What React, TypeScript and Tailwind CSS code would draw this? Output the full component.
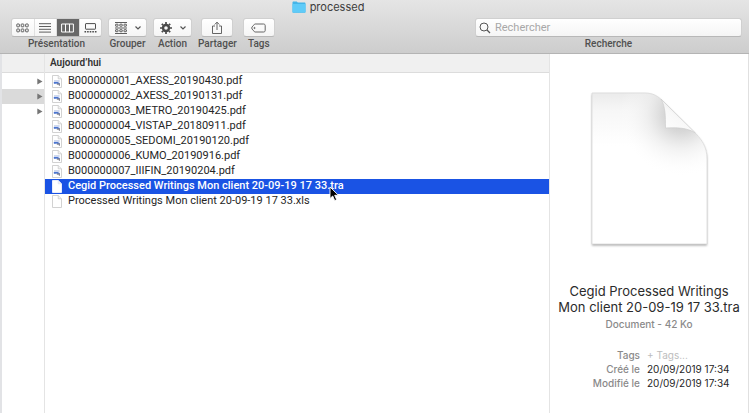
import { useState } from 'react'
import type { ReactNode } from 'react'

type FileKind = 'pdf' | 'blank'

interface FileItem {
  name: string
  kind: FileKind
}

const FILES: FileItem[] = [
  { name: 'B000000001_AXESS_20190430.pdf', kind: 'pdf' },
  { name: 'B000000002_AXESS_20190131.pdf', kind: 'pdf' },
  { name: 'B000000003_METRO_20190425.pdf', kind: 'pdf' },
  { name: 'B000000004_VISTAP_20180911.pdf', kind: 'pdf' },
  { name: 'B000000005_SEDOMI_20190120.pdf', kind: 'pdf' },
  { name: 'B000000006_KUMO_20190916.pdf', kind: 'pdf' },
  { name: 'B000000007_IIIFIN_20190204.pdf', kind: 'pdf' },
  { name: 'Cegid Processed Writings Mon client 20-09-19 17 33.tra', kind: 'blank' },
  { name: 'Processed Writings Mon client 20-09-19 17 33.xls', kind: 'blank' },
]

// Parent column: only the disclosure arrows stick out
const PARENT_ROWS = [{ active: false }, { active: true }, { active: false }]

const VIEWS = [
  { id: 'icons', label: 'Icônes', icon: <IconsViewIcon /> },
  { id: 'list', label: 'Liste', icon: <ListViewIcon /> },
  { id: 'columns', label: 'Colonnes', icon: <ColumnsViewIcon /> },
  { id: 'gallery', label: 'Galerie', icon: <GalleryViewIcon /> },
]

function IconsViewIcon() {
  return (
    <svg width="13" height="10" viewBox="0 0 13 10" fill="none" stroke="#4d4d4d">
      {[0.5, 4.9, 9.3].map(x => [1, 6].map(y => (
        <rect key={`${x}-${y}`} x={x + 0.3} y={y} width="2.6" height="2.8" rx="0.5" strokeWidth="0.9" />
      )))}
    </svg>
  )
}

function ListViewIcon() {
  return (
    <svg width="12" height="10" viewBox="0 0 12 10" stroke="#4d4d4d" strokeWidth="0.9">
      <path d="M0 .7h12M0 3.5h12M0 6.3h12M0 9.1h12" />
    </svg>
  )
}

function ColumnsViewIcon() {
  return (
    <svg width="13" height="10" viewBox="0 0 13 10" fill="none" stroke="#fff">
      <path d="M.6 1h11.8v8H.6zM4.5 1v8M8.5 1v8" />
    </svg>
  )
}

function GalleryViewIcon() {
  return (
    <svg width="13" height="10" viewBox="0 0 13 10" fill="none" stroke="#4d4d4d">
      <rect x="1.5" y=".6" width="10" height="5.6" rx=".5" />
      <path d="M.5 8.8h12" strokeWidth="1.4" strokeDasharray="1.6 1" />
    </svg>
  )
}

function GroupIcon() {
  return (
    <svg width="12" height="12" viewBox="0 0 12 12" fill="none" stroke="#4d4d4d" strokeWidth=".9">
      <path d="M0 .5h12M0 6h12M0 11.5h12" />
      {[0.6, 4.8, 9].map(x => [2.2, 7.7].map(y => (
        <rect key={`${x}-${y}`} x={x} y={y} width="2.4" height="2" rx=".3" />
      )))}
    </svg>
  )
}

function GearIcon() {
  return (
    <svg width="12" height="12" viewBox="0 0 12 12" stroke="#4a4a4a" fill="none">
      <circle cx="6" cy="6" r="3" strokeWidth="2.4" />
      <path d="M6 0v2M6 10v2M0 6h2M10 6h2M1.8 1.8l1.4 1.4M8.8 8.8l1.4 1.4M10.2 1.8 8.8 3.2M3.2 8.8l-1.4 1.4" strokeWidth="1.7" />
    </svg>
  )
}

function ChevronIcon() {
  return (
    <svg width="6" height="4" viewBox="0 0 6 4" fill="none" stroke="#555" strokeWidth="1.2">
      <path d="m.5.5 2.5 2.4L5.5.5" />
    </svg>
  )
}

function ShareIcon() {
  return (
    <svg width="12" height="14" viewBox="0 0 12 14" fill="none" stroke="#555" strokeWidth=".9">
      <path d="M4 5H1.500v7.500h9V5H8M6 9V1.200M3.700 3.500 6 1.200l2.300 2.300" />
    </svg>
  )
}

function TagIcon() {
  return (
    <svg width="15" height="10" viewBox="0 0 15 10" fill="none" stroke="#555" strokeWidth=".9">
      <path d="M4.2 1h8.4c1 0 1.6.6 1.6 1.6v4.8c0 1-.6 1.6-1.6 1.6H4.2C3.3 9 .7 6 .7 5S3.3 1 4.2 1Z" />
      <circle cx="3.5" cy="5" r=".6" />
    </svg>
  )
}

function SearchIcon() {
  return (
    <svg width="12" height="12" viewBox="0 0 12 12" fill="none" stroke="#555">
      <circle cx="5" cy="5" r="4" />
      <path d="m8 8 3 3" strokeWidth="1.2" />
    </svg>
  )
}

function FolderIcon() {
  return (
    <svg width="14" height="12" viewBox="0 0 14 12">
      <path d="M.5 1.6C.5.9.9.6 1.5.6h3.2l1.1 1h6.7c.6 0 1 .4 1 1V11c0 .5-.3.7-.7.7H1.2c-.4 0-.7-.2-.7-.7Z" fill="#45b5e8" />
      <path d="M.5 3h13v8c0 .4-.3.6-.7.6H1.2c-.4 0-.7-.2-.7-.6Z" fill="#5fcbf8" />
    </svg>
  )
}

function FileIcon({ kind, selected }: { kind: FileKind; selected: boolean }) {
  return (
    <svg width="10" height="13" viewBox="0 0 10 13" className="shrink-0">
      <path d="M.5.5h5.7l3.3 3.3v8.7h-9Z" fill="#fff" stroke={selected ? '#fff' : '#c6c6c6'} strokeWidth=".8" />
      <path d="M6.2.5v3.3h3.3" fill="#f2f2f2" stroke={selected ? '#d5dff5' : '#c6c6c6'} strokeWidth=".7" />
      {kind === 'pdf' && (
        <>
          <path d="M2 5h5.600v2H2z" fill="#cfd8ee" />
          <path d="M1.800 8.600V7h3.800l2.200 1v1H5.600L4 8.400l-1 .6Z" fill="#4a74cf" />
          <path d="M4.800 8.600h3.200v2.200H6.800V9.800H4.800z" fill="#85858f" />
        </>
      )}
    </svg>
  )
}

function DocumentPreview() {
  return (
    <svg width="126" height="162" viewBox="-1 0 126 162" role="img" aria-label="Document">
      <defs>
        <linearGradient id="top" x1="0" y1="0" x2="0" y2="1">
          <stop offset="0" stopColor="#ebebeb" />
          <stop offset=".12" stopColor="#f7f7f7" />
          <stop offset=".35" stopColor="#fff" />
        </linearGradient>
        <radialGradient id="shade" gradientUnits="userSpaceOnUse" cx="94" cy="26" r="62">
          <stop offset="0" stopColor="#bdbdbd" />
          <stop offset=".3" stopColor="#d2d2d2" stopOpacity=".8" />
          <stop offset=".55" stopColor="#e9e9e9" stopOpacity=".6" />
          <stop offset="1" stopColor="#fff" stopOpacity="0" />
        </radialGradient>
        <linearGradient id="fold" x1="0" y1="1" x2=".6" y2=".3">
          <stop offset="0" stopColor="#fff" />
          <stop offset=".7" stopColor="#f8f8f8" />
          <stop offset="1" stopColor="#e6e6e6" />
        </linearGradient>
        <filter id="drop" x="-10%" y="-10%" width="120%" height="120%">
          <feDropShadow dx="0" dy="1.5" stdDeviation="1.3" floodOpacity=".35" />
        </filter>
      </defs>
      <g filter="url(#drop)">
        <path d="M5 4h53c8 0 13 3 19 9l28 28c10 9 15 17 15 29v85H5Z" fill="url(#top)" />
      </g>
      <path d="M5 4h53c8 0 13 3 19 9l28 28c10 9 15 17 15 29v85H5Z" fill="url(#shade)" stroke="#d9d9d9" strokeWidth=".8" />
      <path d="M74 10c4.500 8 4.500 17 4.500 29 12-.5 21-.5 30 5L77 13Z" fill="url(#fold)" stroke="#cfcfcf" strokeWidth=".7" />
    </svg>
  )
}

function Cursor() {
  return (
    <svg width="11" height="16" viewBox="0 0 11 16" className="pointer-events-none absolute -bottom-2 left-[284px] z-10">
      <path d="M1 1v11.500l2.700-2.500 2 4.600 2-.9-2-4.400h3.700Z" fill="#000" stroke="#fff" strokeWidth=".9" />
    </svg>
  )
}

function ToolGroup({ label, children }: { label: string; children: ReactNode }) {
  return (
    <div className="flex flex-col items-center gap-[1px]">
      {children}
      <span className="font-['Roboto',sans-serif] text-[10px] leading-3 font-medium text-[#505050]">{label}</span>
    </div>
  )
}

function ToolButton({ label, className, children }: { label: string; className: string; children: ReactNode }) {
  return (
    <button
      aria-label={label}
      className={`flex h-[19px] items-center justify-center rounded-[3px] border border-[#d0d0d0] border-b-[#b8b8b8] bg-linear-to-b from-white to-[#f5f5f5] ${className}`}
    >
      {children}
    </button>
  )
}

function Toolbar() {
  const [view, setView] = useState('columns')
  const [query, setQuery] = useState('')

  return (
    <header className="border-b border-[#b4b4b4] bg-linear-to-b from-[#e5e5e5] to-[#cdcdcd] pb-[3px]">
      <div className="flex items-center justify-center gap-1 pr-[93px]">
        <FolderIcon />
        <h1 className="text-[11px] leading-[14px] text-[#3c3c3c]">processed</h1>
      </div>
      <div className="flex items-start gap-[6px] pt-1 pr-[7px] pl-[11px]">
        <ToolGroup label="Présentation">
          <div className="flex h-[19px] w-[91px] overflow-hidden rounded-[3px] border border-[#d0d0d0] border-b-[#b8b8b8] bg-linear-to-b from-white to-[#f5f5f5]">
            {VIEWS.map(v => (
              <button
                key={v.id}
                aria-label={v.label}
                aria-pressed={view === v.id}
                onClick={() => setView(v.id)}
                className={`flex flex-1 items-center justify-center border-r border-[#e0e0e0] last:border-r-0 ${
                  view === v.id ? 'bg-[#686868]' : ''
                }`}
              >
                {v.icon}
              </button>
            ))}
          </div>
        </ToolGroup>
        <ToolGroup label="Grouper">
          <ToolButton label="Grouper" className="w-[39px] gap-2">
            <GroupIcon />
            <ChevronIcon />
          </ToolButton>
        </ToolGroup>
        <ToolGroup label="Action">
          <ToolButton label="Action" className="w-[39px] gap-2">
            <GearIcon />
            <ChevronIcon />
          </ToolButton>
        </ToolGroup>
        <ToolGroup label="Partager">
          <ToolButton label="Partager" className="w-8"><ShareIcon /></ToolButton>
        </ToolGroup>
        <ToolGroup label="Tags">
          <ToolButton label="Tags" className="w-8"><TagIcon /></ToolButton>
        </ToolGroup>
        <div className="ml-auto flex w-[267px] flex-col items-center gap-[1px]">
          <div className="flex h-[19px] w-full items-center gap-1 rounded-[3px] border border-[#d0d0d0] border-b-[#b8b8b8] bg-linear-to-b from-white to-[#f5f5f5] px-[3px]">
            <SearchIcon />
            <input
              id="search"
              type="text"
              placeholder="Rechercher"
              value={query}
              onChange={e => setQuery(e.target.value)}
              className="min-w-0 flex-1 bg-transparent font-['Roboto',sans-serif] text-[11px] leading-[14px] outline-none placeholder:text-[#a8a8a8]"
            />
          </div>
          <label htmlFor="search" className="font-['Roboto',sans-serif] text-[10px] leading-3 font-medium text-[#505050]">Recherche</label>
        </div>
      </div>
    </header>
  )
}

function ParentColumn() {
  return (
    <div className="w-[43px] shrink-0 border-r border-[#e4e4e4]">
      <div className="h-[19px] border-b border-[#dcdcdc] bg-[#f0f0f0]" />
      <div className="pt-[1px]">
        {PARENT_ROWS.map((row, i) => (
          <div key={i} className={`flex h-[15px] items-center justify-end pr-[1px] ${row.active ? 'bg-[#dadada]' : ''}`}>
            <svg width="6" height="7" viewBox="0 0 6 7">
              <path d="M.3.500v6L5.500 3.500Z" fill="#757575" />
            </svg>
          </div>
        ))}
      </div>
    </div>
  )
}

function FileColumn({ selected, onSelect }: { selected: number; onSelect: (i: number) => void }) {
  return (
    <div className="min-w-0 flex-1 border-r border-[#e4e4e4] font-['Roboto',sans-serif]">
      <h2 className="h-[19px] border-b border-[#dcdcdc] bg-[#f0f0f0] pl-[5px] text-[10px] leading-[18px] font-semibold text-[#333]">
        Aujourd’hui
      </h2>
      <ul className="pt-[1px]">
        {FILES.map((f, i) => (
          <li key={f.name} className="relative">
            <button
              onClick={() => onSelect(i)}
              className={`flex h-[15px] w-full items-center gap-[6px] pl-[7px] text-left text-[11px] whitespace-nowrap ${
                i === selected ? 'bg-[#1a53e4] font-medium text-white' : 'text-[#262626]'
              }`}
            >
              <FileIcon kind={f.kind} selected={i === selected} />
              {f.name}
            </button>
            {i === 7 && <Cursor />}
          </li>
        ))}
      </ul>
    </div>
  )
}

function PreviewColumn() {
  return (
    <aside className="flex w-[199px] shrink-0 flex-col items-center border-r border-[#e0e0e0] pt-[35px]">
      <DocumentPreview />
      <h2 className="mt-[32px] text-center text-[13px] leading-4 text-[#2b2b2b]">
        Cegid Processed Writings<br />Mon client 20-09-19 17 33.tra
      </h2>
      <p className="mt-[2px] text-[10px] leading-[14px] font-medium text-[#8a8a8a]">Document - 42 Ko</p>
      <dl className="mt-[17px] grid w-full grid-cols-[90px_1fr] gap-x-[7px] text-[10px] leading-[14px]">
        <dt className="text-right font-medium text-[#8a8a8a]">Tags</dt>
        <dd className="text-[#bdbdbd]">+ Tags...</dd>
        <dt className="text-right font-medium text-[#8a8a8a]">Créé le</dt>
        <dd className="text-[#262626]">20/09/2019 17:34</dd>
        <dt className="text-right font-medium text-[#8a8a8a]">Modifié le</dt>
        <dd className="text-[#262626]">20/09/2019 17:34</dd>
      </dl>
    </aside>
  )
}

export default function App() {
  const [selected, setSelected] = useState(7)

  return (
    <div className="flex min-h-screen flex-col bg-white font-['Inter',sans-serif]">
      <Toolbar />
      <main className="flex flex-1">
        <div className="w-[2px] shrink-0 bg-[#e2e3e6]" />
        <ParentColumn />
        <FileColumn selected={selected} onSelect={setSelected} />
        <PreviewColumn />
      </main>
    </div>
  )
}
